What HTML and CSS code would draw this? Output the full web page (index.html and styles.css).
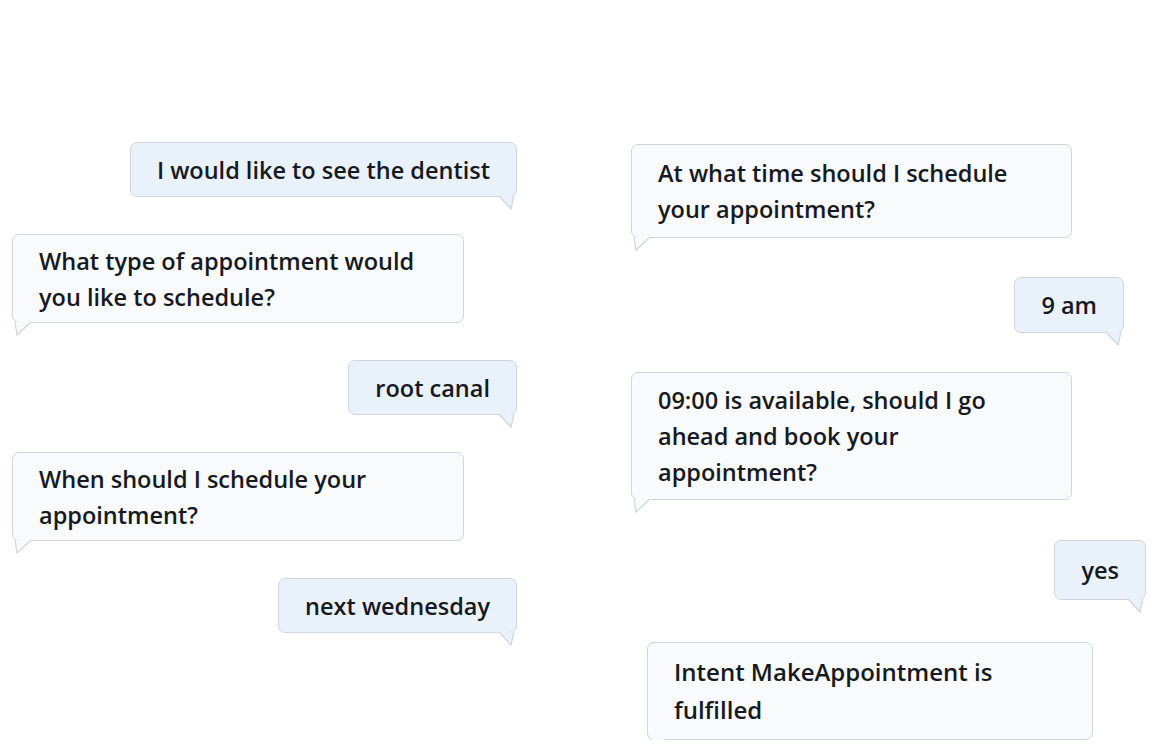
FILE: index.html
```html
<!DOCTYPE html>
<html lang="en">
<head>
<meta charset="utf-8">
<title>Chat</title>
<link rel="stylesheet" href="styles.css">
</head>
<body>
<main class="chat">
  <section class="col col-left">
    <div class="bubble user">I would like to see the dentist<svg class="tail" width="18" height="16" viewBox="0 0 18 16"><path d="M1 0 L13 13 L16 0"/></svg></div>
    <div class="bubble bot wide">What type of appointment would<br>you like to schedule?<svg class="tail" width="20" height="16" viewBox="0 0 20 16"><path d="M2 0 L4 13 L18 0"/></svg></div>
    <div class="bubble user">root canal<svg class="tail" width="18" height="16" viewBox="0 0 18 16"><path d="M1 0 L13 13 L16 0"/></svg></div>
    <div class="bubble bot wide">When should I schedule your<br>appointment?<svg class="tail" width="20" height="16" viewBox="0 0 20 16"><path d="M2 0 L4 13 L18 0"/></svg></div>
    <div class="bubble user">next wednesday<svg class="tail" width="18" height="16" viewBox="0 0 18 16"><path d="M1 0 L13 13 L16 0"/></svg></div>
  </section>
  <section class="col col-right">
    <div class="bubble bot mid pad-a">At what time should I schedule<br>your appointment?<svg class="tail" width="20" height="16" viewBox="0 0 20 16"><path d="M2 0 L4 13 L18 0"/></svg></div>
    <div class="bubble user inset pad-b">9 am<svg class="tail" width="18" height="16" viewBox="0 0 18 16"><path d="M1 0 L13 13 L16 0"/></svg></div>
    <div class="bubble bot mid pad-b">09:00 is available, should I go<br>ahead and book your<br>appointment?<svg class="tail" width="20" height="16" viewBox="0 0 20 16"><path d="M2 0 L4 13 L18 0"/></svg></div>
    <div class="bubble user pad-c shift-1">yes<svg class="tail" width="18" height="16" viewBox="0 0 18 16"><path d="M1 0 L13 13 L16 0"/></svg></div>
    <div class="bubble bot last">Intent MakeAppointment is<br>fulfilled<svg class="tail" width="20" height="16" viewBox="0 0 20 16"><path d="M2 0 L4 13 L18 0"/></svg></div>
  </section>
</main>
</body>
</html>
```
FILE: styles.css
```css
html, body {
  margin: 0;
  padding: 0;
  background: #ffffff;
}

body {
  font-family: "Open Sans", "Noto Sans", sans-serif;
  font-size: 23.5px;
  font-weight: 600;
  color: #16191f;
  overflow: hidden;
}

.chat {
  display: flex;
  align-items: flex-start;
  gap: 114px;
  padding: 142px 0 0 12px;
}

.col {
  display: flex;
  flex-direction: column;
  gap: 37px;
}

.col-left {
  width: 505px;
}

.col-right {
  width: 515px;
  padding-top: 2px;
  gap: 39px;
}

.bubble {
  position: relative;
  box-sizing: border-box;
  line-height: 36px;
  padding: 8.5px 26px;
  border: 1px solid #d0d5db;
  border-radius: 7px;
  white-space: nowrap;
}

.pad-a {
  padding-top: 10px;
  padding-bottom: 10px;
}

.pad-b {
  padding-top: 9px;
  padding-bottom: 9px;
}

.pad-c {
  padding-top: 11px;
  padding-bottom: 11px;
}

.shift-1 {
  margin-top: 1px;
}

.bubble .tail {
  position: absolute;
  top: 100%;
  overflow: visible;
}

.bubble .tail path {
  stroke: #d0d5db;
  stroke-width: 1.2;
  stroke-linejoin: miter;
}

.user {
  align-self: flex-end;
  background: #e9f1fa;
}

.user .tail {
  right: 0;
}

.user .tail path {
  fill: #e9f1fa;
}

.bot {
  align-self: flex-start;
  background: #f8fafc;
}

.bot .tail {
  left: 0;
}

.bot .tail path {
  fill: #f8fafc;
}

.wide {
  width: 452px;
  padding-top: 7.5px;
  padding-bottom: 7.5px;
}

.mid {
  width: 441px;
}

.inset {
  margin-right: 22px;
}

.last {
  width: 446px;
  margin-left: 16px;
  margin-top: 3px;
  line-height: 38px;
  padding-top: 10px;
  padding-bottom: 10px;
  font-size: 24px;
}
```
